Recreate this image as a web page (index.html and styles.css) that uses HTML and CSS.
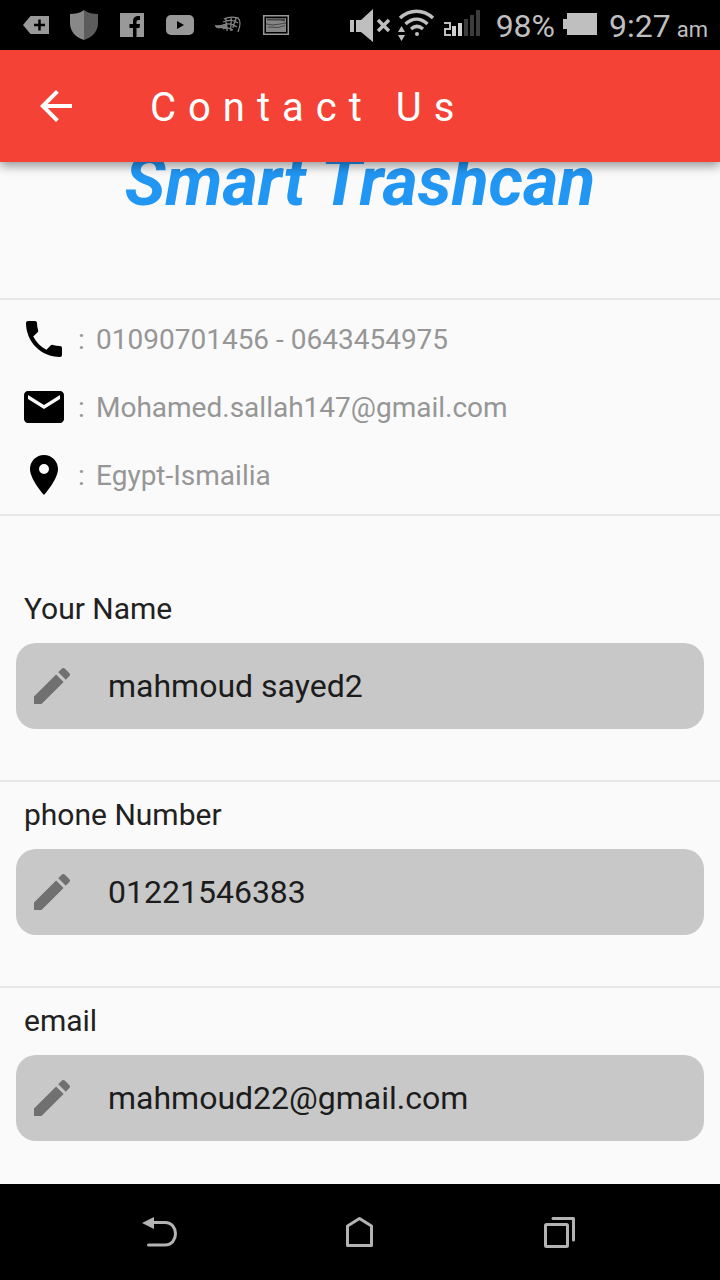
FILE: index.html
```html
<!DOCTYPE html>
<html lang="en">
<head>
<meta charset="utf-8">
<meta name="viewport" content="width=device-width, initial-scale=1">
<title>Contact Us</title>
<link rel="stylesheet" href="styles.css">
</head>
<body>
<div class="status-bar">
  <div class="notifications">
    <svg class="notice" viewBox="0 0 48 50"><path fill="#999" d="M11 25 18.500 16H37v18H18.500z"/><path stroke="#000" stroke-width="2.500" d="M22 25h11M27.500 19.500v11"/></svg>
    <svg class="notice" viewBox="0 0 48 50"><path fill="#888" d="M24 10c-4 3-9 4-14 4v9c0 8 5 14 14 17z"/><path fill="#5c5c5c" d="M24 10c4 3 9 4 14 4v9c0 8-5 14-14 17z"/></svg>
    <svg class="notice" viewBox="0 0 48 50"><path fill="#999" d="M12 13h24v24H12z"/><path fill="#000" d="M25 37v-9h-3.500v-4H25v-2.500c0-4 2-5.500 6-5.500h1v4h-1.500c-1.500 0-2 .7-2 2V24H32l-.5 4h-3v9z"/></svg>
    <svg class="notice" viewBox="0 0 48 50"><rect x="10" y="15" width="28" height="20" rx="5" fill="#999"/><path fill="#000" d="m21 21 7 4-7 4z"/></svg>
    <svg class="notice" viewBox="0 0 48 50" fill="none" stroke="#858585" stroke-width="1.300"><path d="M20 19c4-2 10-2 14-1 3 3 2 9 0 14M19 22c5-2 11-2 15 1M20 25c4-2 9-1 13 2M22 18c-1 5 2 8 1 13M27 17c1 6-1 8 0 14M32 18c-1 5-3 7-3 10M19 29c4-3 7 0 10 1M11 26h9M14 28l7-2"/><path fill="#777" d="m12 27 10-3v4z"/></svg>
    <svg class="notice" viewBox="0 0 48 50"><path fill="none" stroke="#999" stroke-width="1.500" d="M11.700 15.700h24.600v18.600H11.700z"/><path fill="#858585" d="M14 18h20v14H14z"/><path fill="#444" d="M15 18.500h18v3l-5-1H15z"/><path fill="none" stroke="#333" stroke-width=".8" d="M14 24l7 1 7-1 6-1M16 27l10 .5 7-2"/></svg>
  </div>
  <div class="system">
    <svg class="sound" viewBox="0 0 40 50"><path fill="#bfbfbf" d="M0 20h4v12H0zM6 20h5L23 9v33L11 32H6z"/><path stroke="#bfbfbf" stroke-width="3.500" d="m28 20 11 11M39 20 28 31"/></svg>
    <svg class="wifi" viewBox="0 0 38 50"><g fill="none" stroke="#bfbfbf" stroke-width="3.500"><path d="M2 18c10-9 23-9 33 0M7.500 24c7-6.500 15-6.500 22 0M13 29c4-3.500 8-3.500 12 0"/></g><circle cx="19" cy="34" r="2" fill="#bfbfbf"/><path fill="#bfbfbf" d="m0 32 3.500-6L7 32zM0 35h7l-3.500 6z"/></svg>
    <svg class="signal" viewBox="0 0 38 50"><path fill="none" stroke="#bfbfbf" stroke-width="2" d="M0 23h6v6H1v6h6"/><path fill="#d0d0d0" d="M8 26h4v10H8zM14 23h4v13h-4z"/><path fill="#3c3c3c" d="M20 19h4v17h-4zM26 15h4v21h-4zM32 10h4v26h-4z"/></svg>
    <span class="battery-level">98%</span>
    <svg class="battery" viewBox="0 0 34 50"><path fill="#bfbfbf" d="M0 19h4v-6h30v22H4v-6H0z"/></svg>
    <span class="clock">9:27</span><span class="meridiem">am</span>
  </div>
</div>

<header class="app-bar">
  <button class="back" type="button" aria-label="Back"><svg class="icon" viewBox="0 0 24 24"><path fill="#fff" d="M20 11H7.830l5.590-5.590L12 4l-8 8 8 8 1.410-1.410L7.830 13H20v-2z"/></svg></button>
  <h1 class="page-title">Contact Us</h1>
</header>

<main class="content">
  <h2 class="brand">Smart Trashcan</h2>
  <ul class="contacts">
    <li class="contact"><svg class="icon" viewBox="0 0 24 24"><path d="M6.620 10.790c1.440 2.830 3.760 5.140 6.590 6.590l2.200-2.200c.27-.27.67-.36 1.020-.24 1.120.37 2.330.57 3.570.57.55 0 1 .45 1 1V20c0 .55-.45 1-1 1-9.390 0-17-7.610-17-17 0-.55.45-1 1-1h3.500c.55 0 1 .45 1 1 0 1.250.2 2.450.57 3.570.11.35.03.74-.25 1.020l-2.200 2.200z"/></svg><span class="colon">:</span><span>01090701456 - 0643454975</span></li>
    <li class="contact"><svg class="icon" viewBox="0 0 24 24"><path d="M20 4H4c-1.100 0-2 .9-2 2v12c0 1.100.9 2 2 2h16c1.100 0 2-.9 2-2V6c0-1.100-.9-2-2-2zm0 4-8 5-8-5V6l8 5 8-5v2z"/></svg><span class="colon">:</span><span>Mohamed.sallah147@gmail.com</span></li>
    <li class="contact"><svg class="icon" viewBox="0 0 24 24"><path d="M12 2C8.130 2 5 5.130 5 9c0 5.250 7 13 7 13s7-7.750 7-13c0-3.870-3.130-7-7-7zm0 9.500a2.500 2.500 0 0 1 0-5 2.500 2.500 0 0 1 0 5z"/></svg><span class="colon">:</span><span>Egypt-Ismailia</span></li>
  </ul>

  <form class="form">
    <div class="field">
      <label class="label" for="name">Your Name</label>
      <div class="box"><svg class="icon pencil" viewBox="0 0 24 24"><path d="M3 17.250V21h3.750L17.810 9.940l-3.750-3.750L3 17.250zM20.710 7.040a1 1 0 0 0 0-1.410l-2.340-2.340a1 1 0 0 0-1.410 0l-1.830 1.830 3.750 3.750 1.830-1.830z"/></svg><input class="input" id="name" type="text" value="mahmoud sayed2"></div>
    </div>
    <div class="field">
      <label class="label" for="phone">phone Number</label>
      <div class="box"><svg class="icon pencil" viewBox="0 0 24 24"><path d="M3 17.250V21h3.750L17.810 9.940l-3.750-3.750L3 17.250zM20.710 7.040a1 1 0 0 0 0-1.410l-2.340-2.340a1 1 0 0 0-1.410 0l-1.830 1.830 3.750 3.750 1.830-1.830z"/></svg><input class="input" id="phone" type="tel" value="01221546383"></div>
    </div>
    <div class="field">
      <label class="label" for="email">email</label>
      <div class="box"><svg class="icon pencil" viewBox="0 0 24 24"><path d="M3 17.250V21h3.750L17.810 9.940l-3.750-3.750L3 17.250zM20.710 7.040a1 1 0 0 0 0-1.410l-2.340-2.340a1 1 0 0 0-1.410 0l-1.830 1.830 3.750 3.750 1.830-1.830z"/></svg><input class="input" id="email" type="email" value="mahmoud22@gmail.com"></div>
    </div>
  </form>
</main>

<nav class="nav-bar" aria-label="System">
  <button class="nav-button" type="button" aria-label="Back"><svg class="icon" viewBox="0 0 48 48"><path fill="#b3b3b3" d="m6 15 12-6v12z"/><path fill="none" stroke="#b3b3b3" stroke-width="3" stroke-linecap="round" d="M17 14.500h12c14 0 14 22.500 0 22.500H12.500"/></svg></button>
  <button class="nav-button" type="button" aria-label="Home"><svg class="icon" viewBox="0 0 48 48"><path fill="none" stroke="#b3b3b3" stroke-width="3" stroke-linejoin="round" d="M11.500 37.500V18L23.500 10.500 35.500 18v19.500z"/></svg></button>
  <button class="nav-button" type="button" aria-label="Recent apps"><svg class="icon" viewBox="0 0 48 48"><g fill="none" stroke="#b3b3b3" stroke-width="3" stroke-linejoin="round" stroke-linecap="round"><rect x="9.500" y="16.500" width="22" height="22" rx="1"/><path d="M17 10.500h20.500V32"/></g></svg></button>
</nav>
</body>
</html>
```
FILE: styles.css
```css
* { box-sizing: border-box; }

body {
  margin: 0;
  min-height: 100vh;
  display: flex;
  flex-direction: column;
  background: #fafafa;
  color: #212121;
  font-family: Roboto, "Noto Sans", sans-serif;
}

button {
  padding: 0;
  border: 0;
  background: none;
}

.icon {
  display: block;
  flex: none;
  width: 48px;
  height: 48px;
}

.status-bar {
  display: flex;
  justify-content: space-between;
  height: 50px;
  padding: 0 12px;
  background: #000;
  color: #bfbfbf;
}

.notifications,
.system {
  display: flex;
  align-items: center;
}

.notice { width: 48px; height: 50px; }
.sound { width: 40px; height: 50px; margin-right: 8px; }
.wifi { width: 38px; height: 50px; margin-right: 8px; }
.signal { width: 38px; height: 50px; margin-right: 14px; }
.battery { width: 34px; height: 50px; margin: 0 12px 0 8px; }

.battery-level,
.clock {
  padding-top: 2px;
  font-size: 32px;
}

.meridiem {
  margin-left: 6px;
  padding-top: 8px;
  font-size: 22px;
}

.app-bar {
  position: relative;
  z-index: 1;
  display: flex;
  align-items: center;
  gap: 70px;
  height: 112px;
  padding: 0 32px;
  background: #f44336;
  box-shadow: 0 4px 10px rgba(0, 0, 0, 0.4);
}

.page-title {
  margin: 0;
  padding-top: 2px;
  color: #fff;
  font-size: 40px;
  font-weight: 400;
  letter-spacing: 12px;
}

.content {
  flex: 1;
  overflow: hidden;
}

.brand {
  margin: -20px 0 0;
  padding-bottom: 76px;
  color: #2196f3;
  font-size: 68px;
  font-style: italic;
  font-weight: 700;
  line-height: 80px;
  text-align: center;
}

.contacts {
  margin: 0;
  padding: 5px 20px;
  border: solid #e8e8e8;
  border-width: 2px 0;
  list-style: none;
}

.contact {
  display: flex;
  align-items: center;
  height: 68px;
  color: #969696;
  font-size: 28px;
}

.colon {
  width: 28px;
  padding-left: 10px;
}

.form { padding-top: 60px; }

.field {
  padding: 15px 16px 51px;
  border-bottom: 2px solid #e8e8e8;
}

.field:last-child {
  padding-bottom: 43px;
  border-bottom: 0;
}

.label {
  display: block;
  margin-bottom: 16px;
  padding-left: 8px;
  font-size: 30px;
  line-height: 36px;
}

.box {
  display: flex;
  align-items: center;
  gap: 32px;
  height: 86px;
  padding: 0 12px;
  border-radius: 20px;
  background: #c8c8c8;
}

.pencil { fill: #707070; }

.input {
  flex: 1;
  min-width: 0;
  padding: 0;
  border: 0;
  outline: 0;
  background: none;
  color: #1c1c1c;
  font: inherit;
  font-size: 32px;
}

.nav-bar {
  display: flex;
  justify-content: center;
  align-items: center;
  height: 96px;
  padding: 0 60px;
  background: #000;
}

.nav-button {
  display: flex;
  flex: 1;
  justify-content: center;
}
```
